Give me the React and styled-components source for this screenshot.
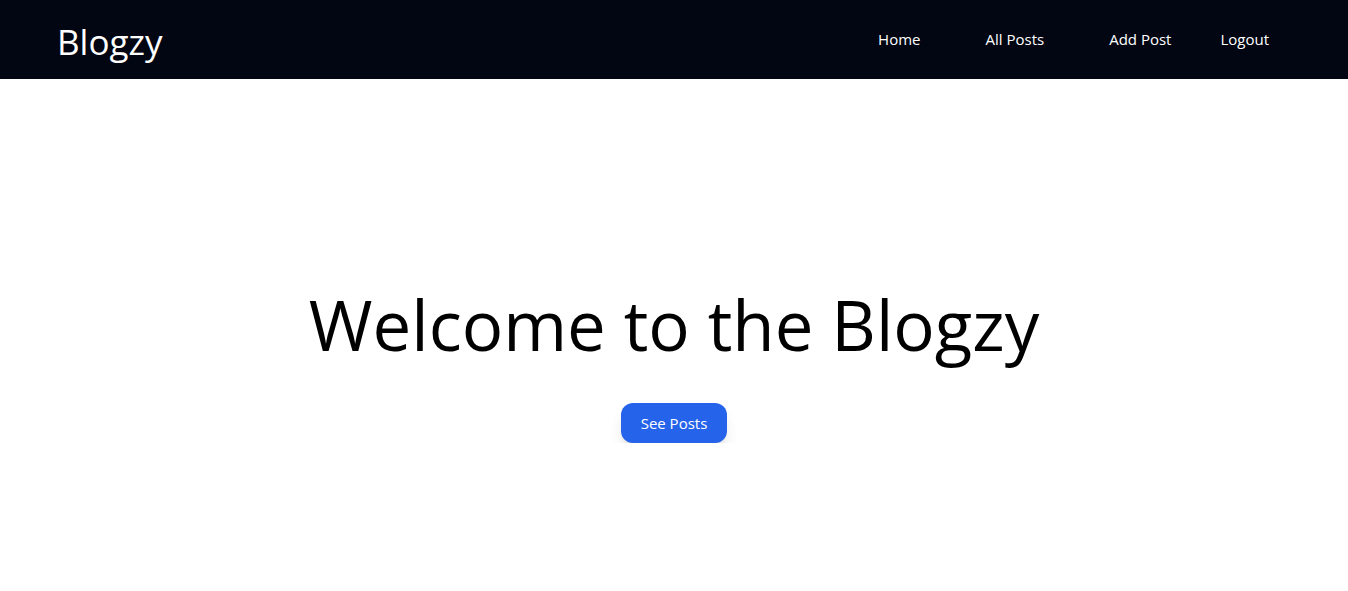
import React from "react";
import styled, { createGlobalStyle } from "styled-components";

const GlobalStyle = createGlobalStyle`
  html, body { margin: 0; padding: 0; background: #ffffff; }
  body { font-family: "Segoe UI", "Open Sans", "Noto Sans", sans-serif; }
  * { box-sizing: border-box; }
`;

const Header = styled.header`
  height: 79px;
  background: #020512;
  display: flex;
  align-items: center;
  justify-content: space-between;
  padding: 0 71px 0 57px;
`;

const Logo = styled.a`
  color: #ffffff;
  font-size: 35px;
  line-height: 1;
  text-decoration: none;
  margin-top: 3px;
`;

const Nav = styled.ul`
  display: flex;
  gap: 17px;
  list-style: none;
  margin: 0 0 2px;
  padding: 0;
`;

const NavLink = styled.a`
  display: block;
  color: #ffffff;
  font-size: 15px;
  line-height: 24px;
  text-decoration: none;
  padding: 8px ${(p) => (p.$tight ? "8px" : "24px")};
`;

const Main = styled.main`
  display: flex;
  flex-direction: column;
  align-items: center;
  padding-top: 211px;
`;

const Title = styled.h1`
  margin: 0;
  font-size: 69px;
  font-weight: 400;
  line-height: 1;
  color: #000000;
`;

const Button = styled.button`
  margin-top: 44px;
  background: #2563eb;
  color: #ffffff;
  border: none;
  border-radius: 12px;
  font-family: inherit;
  font-size: 15px;
  line-height: 24px;
  padding: 8px 20px;
  box-shadow: 0 10px 15px -3px rgba(0, 0, 0, 0.12), 0 4px 6px -4px rgba(0, 0, 0, 0.12);
  cursor: pointer;
`;

const links = [
  { label: "Home" },
  { label: "All Posts" },
  { label: "Add Post" },
  { label: "Logout", tight: true },
];

export default function App() {
  return (
    <>
      <GlobalStyle />
      <Header>
        <Logo href="#">Blogzy</Logo>
        <Nav>
          {links.map((l) => (
            <li key={l.label}>
              <NavLink href="#" $tight={l.tight}>
                {l.label}
              </NavLink>
            </li>
          ))}
        </Nav>
      </Header>
      <Main>
        <Title>Welcome to the Blogzy</Title>
        <Button>See Posts</Button>
      </Main>
    </>
  );
}
